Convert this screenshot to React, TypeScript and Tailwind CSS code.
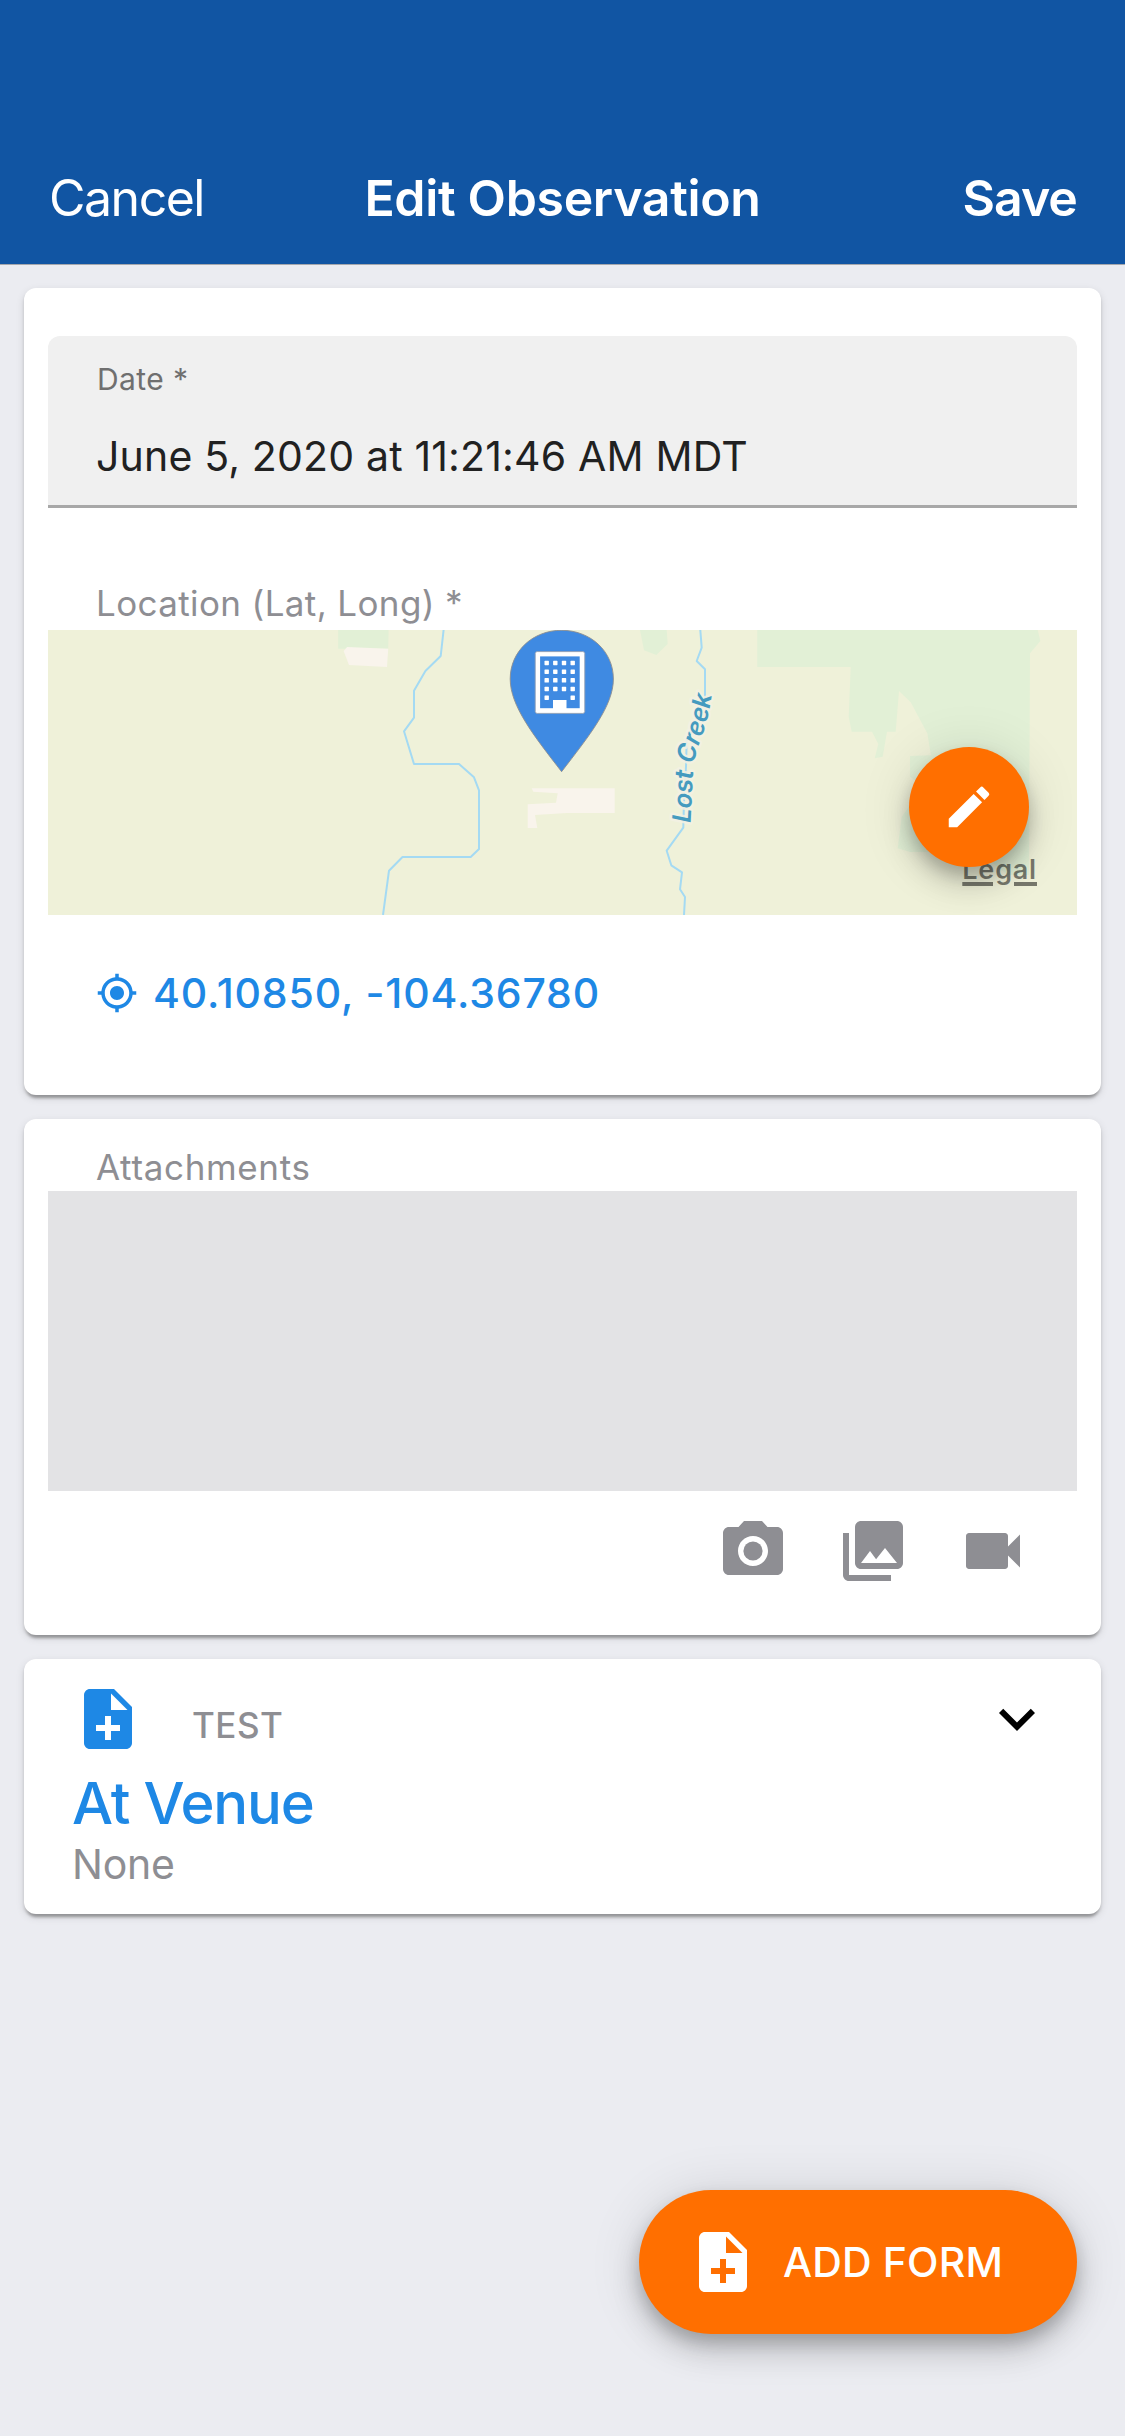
import type { ReactNode } from "react";
import {
  MdEdit,
  MdKeyboardArrowDown,
  MdMyLocation,
  MdNoteAdd,
  MdPhotoCamera,
  MdPhotoLibrary,
  MdVideocam,
} from "react-icons/md";

function Card({ className, children }: { className: string; children: ReactNode }) {
  return (
    <section
      className={`rounded-xl bg-white shadow-[0_6px_3px_-3px_rgba(0,0,0,0.2),0_3px_3px_0_rgba(0,0,0,0.14),0_3px_9px_0_rgba(0,0,0,0.12)] ${className}`}
    >
      {children}
    </section>
  );
}

function Header() {
  return (
    <header className="grid h-[265px] grid-cols-[1fr_auto_1fr] items-center border-b border-[#a5a7ad] bg-[#1155a3] px-12 pt-[132px] text-[50px] leading-[60px] text-white">
      <button className="ml-px justify-self-start tracking-[-1.5px]">Cancel</button>
      <h1 className="font-semibold tracking-[-0.33px]">Edit Observation</h1>
      <button className="justify-self-end font-semibold tracking-[-0.94px]">Save</button>
    </header>
  );
}

const windowRows = [33, 41.7, 50.3, 59, 67.7];
const windowCols = [498.7, 507.3, 516, 524.7];

function LocationMap() {
  return (
    <svg viewBox="0 0 1029 285" className="block h-[285px] w-full" aria-label="Location map">
      <rect width="1029" height="285" fill="#eff1d9" />
      <g fill="#e2f0d6">
        <path d="M290.2 0H340.6L340.2 18.7H290.2Z" />
        <path d="M592 0H618.7L619.7 14L608.3 25L596 20.3Z" />
        <path d="M709.3 0H989.7L992.3 11L982 23.3L981 245H960L930 222H862L849.7 218.3L853.7 186.7L861 176.7L880 160L862 146.7V126L883 125.3L879.3 103.3L862.7 72.3L851 61L847.7 101.7H839L834.7 126.7L826.7 128.3L830.3 114L824 101.7H803.7L800.7 86.7L802.7 37H709.3Z" />
      </g>
      <g fill="#f9f4ec">
        <path d="M299.1 17L340.2 18.7L339 37L301 35L295.6 21Z" />
        <path d="M483.7 158.3H566.7V183H518.7L487 185L489.3 198H479.7V174.3L508 172.7L509.7 163.3L485.3 161.7Z" />
      </g>
      <g fill="none" stroke="#a4daf3" strokeWidth="2" strokeLinejoin="round">
        <path d="M395.6 0L392.7 26L377.4 41L366 60.7V87.7L356 101.3L366 134H411L426 147.3L431 160.3V219L422.7 227H354.5L341 240.7L335 285" />
        <path d="M652.3 0L653.7 17.7L648.7 31L657 39.3V70L638.7 110L638 136.7L636 170L635.3 197.7L618.7 220.7L623.3 235.3L634 242.3L632 259.3L637 267L636 285" />
      </g>
      <path id="creek" d="M642.6 193L645 142Q646.2 128 650.4 116Q662 88 665.2 50" fill="none" />
      <text
        fill="#459bbf"
        stroke="#f3f1e4"
        strokeWidth="5"
        strokeLinejoin="round"
        strokeOpacity="0.85"
        paintOrder="stroke"
        className="font-['Inter'] text-[25.5px] font-semibold italic"
      >
        <textPath href="#creek" textLength="131" lengthAdjust="spacing">
          Lost Creek
        </textPath>
      </text>
      <path
        d="M513.6 141.7C486 106 462.2 76 462.2 49C462.2 21 485 0.3 513.6 0.3S565.4 21 565.4 49C565.4 76 541 106 513.6 141.7Z"
        fill="#3f8ae2"
        stroke="#8d8f90"
        strokeWidth="0.9"
      />
      <rect x="487.2" y="21.6" width="49.6" height="61.8" rx="2" fill="#fff" stroke="#8d9db4" strokeWidth="0.9" />
      <rect x="492.1" y="26.4" width="39.6" height="51.8" fill="#3f8ae2" />
      <rect x="505" y="70" width="13.5" height="10" fill="#fff" />
      {windowRows.map((cy, row) =>
        windowCols
          .filter((_, col) => row < 4 || col === 0 || col === 3)
          .map((cx) => (
            <rect key={`${cx}-${cy}`} x={cx - 2.2} y={cy - 2.2} width="4.4" height="4.4" rx="0.6" fill="#fff" />
          )),
      )}
    </svg>
  );
}

function ObservationCard() {
  return (
    <Card className="h-[807px] px-6 pt-12">
      <div className="flex h-[172px] flex-col rounded-t-xl border-b-[3px] border-[#a8a8a8] bg-[#f0f0f0] px-12">
        <label className="mt-[25px] ml-px text-[30px] leading-9 tracking-[0.4px] text-[#6f6f6f]">Date *</label>
        <p className="mt-[34px] text-[41px] leading-[50px] tracking-[0.17px] text-[#212121]">
          June 5, 2020 at 11:21:46 AM MDT
        </p>
      </div>
      <p className="mt-[74px] pl-12 text-[35px] leading-[42px] tracking-[0.37px] text-[#8e8e93]">
        Location (Lat, Long) *
      </p>
      <div className="relative mt-[6px]">
        <LocationMap />
        <a className="absolute right-[40px] bottom-[27px] text-[27px] leading-[36px] font-semibold tracking-[0.8px] text-black/50 underline decoration-[3.6px] underline-offset-[3px]">
          Legal
        </a>
        <button className="absolute top-[117px] right-12 flex size-[120px] items-center justify-center rounded-full bg-[#ff6f00] text-white shadow-[0_9px_15px_0_rgba(0,0,0,0.17),0_18px_30px_0_rgba(0,0,0,0.14),0_3px_54px_0_rgba(0,0,0,0.12)]">
          <MdEdit size={54} />
        </button>
      </div>
      <div className="mt-[53px] flex items-center pl-12 text-[#1e88e5]">
        <MdMyLocation size={42} />
        <span className="ml-[15px] text-[41px] leading-[50px] font-medium tracking-[0.85px]">
          40.10850, -104.36780
        </span>
      </div>
    </Card>
  );
}

function AttachmentsCard() {
  return (
    <Card className="h-[516px] px-6 pt-[27px]">
      <p className="pl-12 text-[35px] leading-[42px] tracking-[0.66px] text-[#8e8e93]">Attachments</p>
      <div className="mt-[3px] h-[300px] bg-[#e3e3e5]" />
      <div className="mt-6 flex justify-end gap-12 pr-12 text-[#8e8e93]">
        <MdPhotoCamera size={72} />
        <MdPhotoLibrary size={72} />
        <MdVideocam size={72} />
      </div>
    </Card>
  );
}

function FormCard() {
  return (
    <Card className="h-[255px] px-12 pt-6">
      <div className="flex h-[72px] items-center">
        <MdNoteAdd size={72} className="text-[#1e88e5]" />
        <span className="mt-[11px] ml-12 text-[35px] leading-[42px] font-medium tracking-[0.48px] text-[#8e8e93]">
          TEST
        </span>
        <MdKeyboardArrowDown size={72} className="ml-auto" />
      </div>
      <h2 className="mt-[13px] text-[58px] leading-[70px] font-medium tracking-[-1.15px] text-[#1e88e5]">
        At Venue
      </h2>
      <p className="mt-[1px] text-[41px] leading-[50px] tracking-[-0.23px] text-[#8e8e93]">None</p>
    </Card>
  );
}

export default function App() {
  return (
    <div className="relative flex h-[2436px] w-[1125px] flex-col overflow-hidden bg-[#ebecf1] font-['Inter',sans-serif]">
      <Header />
      <main className="flex flex-col gap-6 px-6 pt-[23px]">
        <ObservationCard />
        <AttachmentsCard />
        <FormCard />
      </main>
      <button className="absolute right-12 bottom-[102px] flex h-36 w-[438px] items-center rounded-full bg-[#ff6f00] pl-12 text-white shadow-[0_9px_15px_0_rgba(0,0,0,0.17),0_18px_30px_0_rgba(0,0,0,0.14),0_3px_54px_0_rgba(0,0,0,0.12)]">
        <MdNoteAdd size={72} />
        <span className="ml-6 text-[41px] leading-[50px] font-medium tracking-[0.15px]">ADD FORM</span>
      </button>
    </div>
  );
}
